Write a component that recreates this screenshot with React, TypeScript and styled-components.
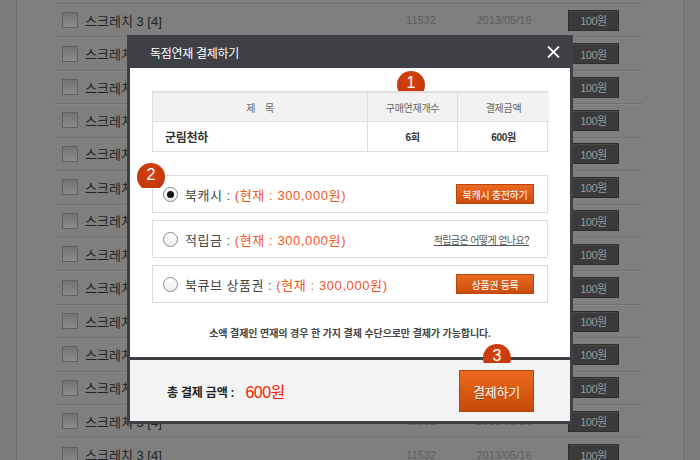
import React from "react";
import styled, { createGlobalStyle } from "styled-components";

const FONT = `"Liberation Sans", "Noto Sans CJK KR", sans-serif`;

const Global = createGlobalStyle`
  html, body { margin: 0; padding: 0; background: #7f7f7f; }
  body { font-family: ${FONT}; }
  * { box-sizing: border-box; }
`;

const Page = styled.div`
  position: relative;
  width: 700px;
  height: 460px;
  overflow: hidden;
  display: flex;
  background: #7f7f7f;
`;

const SideStrip = styled.div<{ $right?: boolean }>`
  width: 17px;
  flex: none;
  background: #7b7b7b;
  ${(p) => (p.$right ? "border-left: 1px solid #707070;" : "border-right: 1px solid #707070;")}
`;

const Main = styled.div`
  flex: 1;
  padding: 3px 40px 0 38px;
`;

const Row = styled.div`
  height: 33.43px;
  display: flex;
  align-items: center;
  padding-left: 7px;
  border-top: 1px solid #717171;
  box-shadow: inset 0 1px 0 #868686;
`;

const Check = styled.span`
  width: 16px;
  height: 16px;
  flex: none;
  border: 1px solid #606060;
  background: linear-gradient(#727272, #8c8c8c);
`;

const RowTitle = styled.span`
  width: 313px;
  padding-left: 7px;
  font-size: 13px;
  color: #232323;
  white-space: nowrap;
  overflow: hidden;
`;

const RowCell = styled.span<{ $w: number }>`
  width: ${(p) => p.$w}px;
  text-align: center;
  font-size: 11px;
  color: #5e5e5e;
`;

const DarkBtn = styled.span`
  margin-left: 11px;
  width: 51px;
  height: 21px;
  display: flex;
  align-items: center;
  justify-content: center;
  background: #3a3a3a;
  border: 1px solid #2e2e2e;
  box-shadow: inset 0 1px 0 #4a4a4a;
  color: #9a9a9a;
  font-size: 11px;
  letter-spacing: -0.5px;
`;

const Modal = styled.div`
  position: absolute;
  left: 127px;
  top: 35px;
  width: 446px;
  height: 389px;
  background: #3f4046;
  padding: 0 3px 3px 3px;
  display: flex;
  flex-direction: column;
`;

const TitleBar = styled.div`
  height: 33px;
  display: flex;
  align-items: center;
  justify-content: space-between;
  padding: 1px 10px 0 20px;
  color: #ffffff;
  font-size: 12px;
  letter-spacing: -0.3px;
`;

const Body = styled.div`
  height: 289px;
  background: #ffffff;
  padding: 23px 22px 0 22px;
  display: flex;
  flex-direction: column;
`;

const Table = styled.div`
  position: relative;
  z-index: 2;
  display: grid;
  grid-template-columns: 215px 90px 91px;
  border: 1px solid #dcdcdc;
  border-top: 2px solid #e0e0e0;
  background: #fff;
`;

const HeadCell = styled.div<{ $last?: boolean }>`
  height: 29px;
  display: flex;
  align-items: center;
  justify-content: center;
  background: #f2f2f2;
  border-bottom: 1px solid #dcdcdc;
  ${(p) => (p.$last ? "" : "border-right: 1px solid #dcdcdc;")}
  font-size: 10px;
  color: #666;
  letter-spacing: -0.3px;
  white-space: pre;
`;

const DataCell = styled.div<{ $last?: boolean; $left?: boolean }>`
  height: 29px;
  display: flex;
  align-items: center;
  justify-content: ${(p) => (p.$left ? "flex-start" : "center")};
  padding-left: ${(p) => (p.$left ? "12px" : "0")};
  ${(p) => (p.$last ? "" : "border-right: 1px solid #dcdcdc;")}
  font-size: ${(p) => (p.$left ? "12px" : "10px")};
  font-weight: bold;
  color: #333;
  letter-spacing: -0.3px;
`;

const Options = styled.div`
  margin-top: 23px;
  display: flex;
  flex-direction: column;
  gap: 7px;
`;

const OptionBox = styled.div`
  height: 38px;
  border: 1px solid #dcdcdc;
  display: flex;
  align-items: center;
  padding: 0 13px 0 10px;
`;

const Radio = styled.span<{ $on?: boolean }>`
  position: relative;
  width: 15px;
  height: 15px;
  flex: none;
  border-radius: 50%;
  border: 1px solid #8a8a8a;
  background: linear-gradient(#ffffff, #ececec);
  margin-right: 7px;
  &::after {
    content: "";
    display: ${(p) => (p.$on ? "block" : "none")};
    position: absolute;
    left: 3px;
    top: 3px;
    width: 7px;
    height: 7px;
    border-radius: 50%;
    background: #111;
  }
`;

const Label = styled.span`
  font-size: 13px;
  color: #444;
  letter-spacing: 0.5px;
  white-space: pre;
`;

const Amount = styled.span`
  font-size: 13px;
  color: #f0561f;
  letter-spacing: 0.6px;
  white-space: pre;
  flex: 1;
`;

const OrangeBtn = styled.span`
  width: 78px;
  height: 20px;
  display: flex;
  align-items: center;
  justify-content: center;
  background: linear-gradient(#ea6a22, #cc4c0c);
  border: 1px solid #b9440c;
  color: #fff;
  font-size: 10px;
  letter-spacing: -0.3px;
`;

const HelpLink = styled.a`
  margin-right: 5px;
  font-size: 10px;
  color: #555;
  text-decoration: underline;
  letter-spacing: -0.6px;
`;

const Notice = styled.p`
  margin: 22px 0 0 0;
  text-align: center;
  font-size: 10px;
  font-weight: bold;
  color: #444;
  letter-spacing: -0.1px;
`;

const Footer = styled.div`
  margin-top: 3px;
  height: 61px;
  background: #f4f4f4;
  display: flex;
  align-items: center;
  justify-content: space-between;
  padding: 0 36px 0 37px;
`;

const Total = styled.div`
  display: flex;
  align-items: center;
  gap: 8px;
  padding-top: 1px;
`;

const TotalLabel = styled.span`
  font-size: 12px;
  font-weight: bold;
  color: #222;
  letter-spacing: -0.2px;
  white-space: pre;
`;

const TotalValue = styled.span`
  font-size: 16px;
  color: #ff1a00;
  letter-spacing: -0.6px;
`;

const PayBtn = styled.span`
  width: 75px;
  height: 42px;
  margin-top: 1px;
  display: flex;
  align-items: center;
  justify-content: center;
  background: linear-gradient(#ec6a1e, #c84a08);
  border: 1px solid #b4440e;
  color: #fff;
  font-size: 13px;
  letter-spacing: -0.2px;
  text-shadow: 0 1px 0 rgba(0, 0, 0, 0.25);
`;

const BadgeClip = styled.div<{ $x: number; $y: number; $h: number }>`
  position: absolute;
  z-index: 3;
  left: ${(p) => p.$x}px;
  top: ${(p) => p.$y}px;
  width: 28px;
  height: ${(p) => p.$h}px;
  overflow: hidden;
`;

const BadgeCircle = styled.div`
  width: 28px;
  height: 28px;
  border-radius: 50%;
  background: radial-gradient(circle at 50% 35%, #d6420f, #b9330a);
  color: #fff;
  font-size: 16px;
  line-height: 23px;
  text-align: center;
  font-family: ${FONT};
`;

const Badge = ({ n, x, y, h }: { n: number; x: number; y: number; h: number }) => (
  <BadgeClip $x={x} $y={y} $h={h}>
    <BadgeCircle>{n}</BadgeCircle>
  </BadgeClip>
);

const CloseIcon = () => (
  <svg width="13" height="12" viewBox="0 0 13 12">
    <path d="M1 0.5 L12 11.5 M12 0.5 L1 11.5" stroke="#fff" strokeWidth="1.8" />
  </svg>
);

export default function App() {
  const rows = Array.from({ length: 14 });
  return (
    <Page>
      <Global />
      <SideStrip />
      <Main>
        {rows.map((_, i) => (
          <Row key={i}>
            <Check />
            <RowTitle>스크레치 3 [4]</RowTitle>
            <RowCell $w={60}>11532</RowCell>
            <RowCell $w={106}>2013/05/16</RowCell>
            <DarkBtn>100원</DarkBtn>
          </Row>
        ))}
      </Main>
      <SideStrip $right />
      <Modal>
        <TitleBar>
          <span>독점연재 결제하기</span>
          <CloseIcon />
        </TitleBar>
        <Body>
          <Table>
            <HeadCell>{"제    목"}</HeadCell>
            <HeadCell>구매연재개수</HeadCell>
            <HeadCell $last>결제금액</HeadCell>
            <DataCell $left>군림천하</DataCell>
            <DataCell>6회</DataCell>
            <DataCell $last>600원</DataCell>
          </Table>
          <Options>
            <OptionBox>
              <Radio $on />
              <Label>북캐시 : </Label>
              <Amount>(현재 : 300,000원)</Amount>
              <OrangeBtn>북캐시 충전하기</OrangeBtn>
            </OptionBox>
            <OptionBox>
              <Radio />
              <Label>적립금 : </Label>
              <Amount>(현재 : 300,000원)</Amount>
              <HelpLink>적립금은 어떻게 얻나요?</HelpLink>
            </OptionBox>
            <OptionBox>
              <Radio />
              <Label>북큐브 상품권 : </Label>
              <Amount>(현재 : 300,000원)</Amount>
              <OrangeBtn>상품권 등록</OrangeBtn>
            </OptionBox>
          </Options>
          <Notice>소액 결제인 연재의 경우 한 가지 결제 수단으로만 결제가 가능합니다.</Notice>
        </Body>
        <Footer>
          <Total>
            <TotalLabel>총 결제 금액 : </TotalLabel>
            <TotalValue>600원</TotalValue>
          </Total>
          <PayBtn>결제하기</PayBtn>
        </Footer>
        <Badge n={1} x={270} y={36} h={20} />
        <Badge n={2} x={10} y={128} h={25} />
        <Badge n={3} x={356} y={309} h={19} />
      </Modal>
    </Page>
  );
}
